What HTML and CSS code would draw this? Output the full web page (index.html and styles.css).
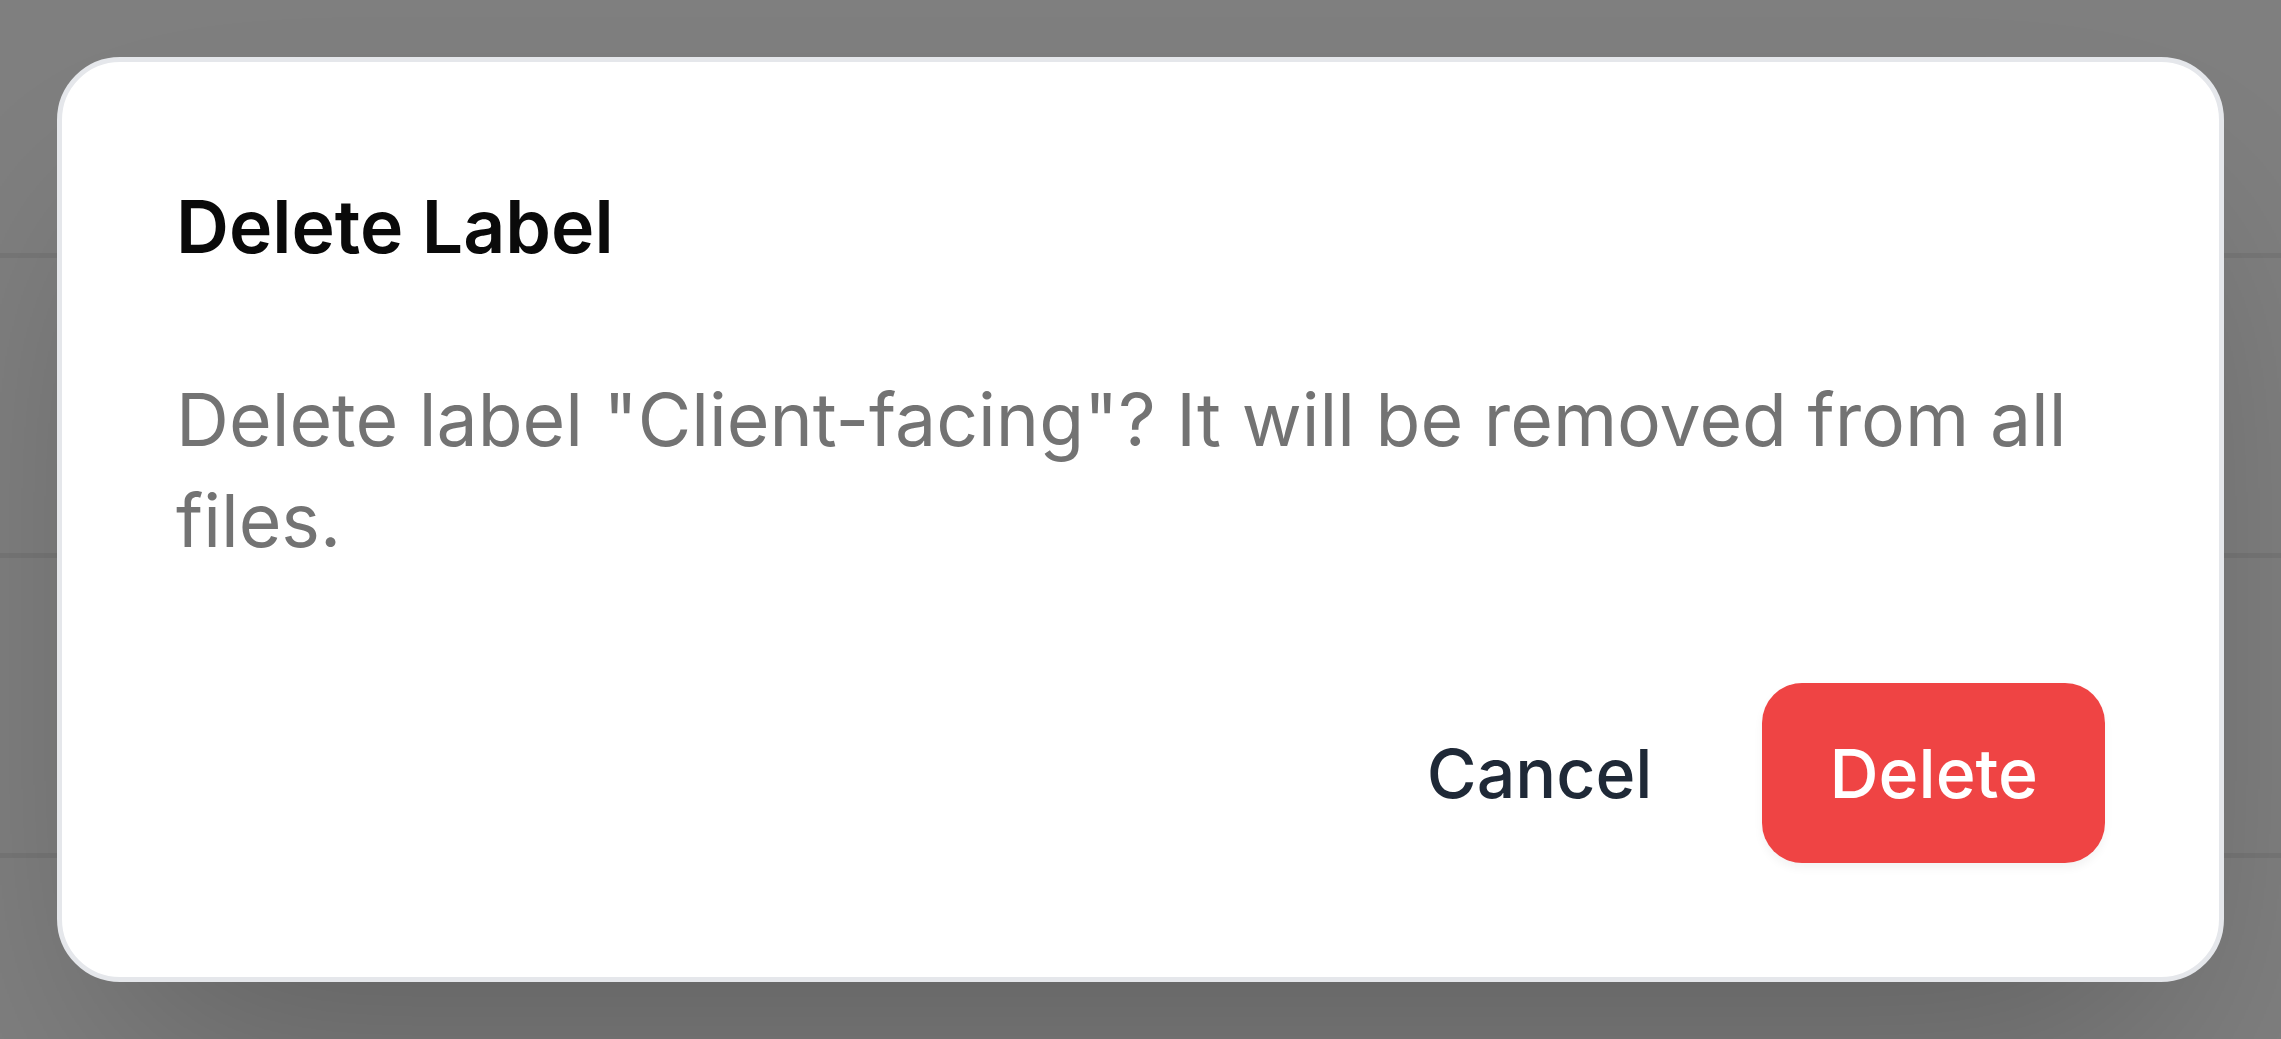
FILE: index.html
```html
<!DOCTYPE html>
<html lang="en">
<head>
<meta charset="utf-8">
<title>Delete Label</title>
<link rel="stylesheet" href="styles.css">
</head>
<body>
<div class="page">
  <div class="row row-first"></div>
  <div class="row"></div>
  <div class="row"></div>
  <div class="row-rest"></div>
</div>
<div class="overlay">
  <div class="modal" role="dialog" aria-labelledby="dlg-title">
    <h2 class="modal-title" id="dlg-title">Delete Label</h2>
    <p class="modal-text">Delete label "Client-facing"? It will be removed from all files.</p>
    <div class="modal-actions">
      <button class="btn btn-cancel" type="button">Cancel</button>
      <button class="btn btn-danger" type="button">Delete</button>
    </div>
  </div>
</div>
</body>
</html>
```
FILE: styles.css
```css
* { box-sizing: border-box; }
html, body { margin: 0; padding: 0; height: 100%; }
body {
  background: #ffffff;
  font-family: Inter, "Noto Sans", "Liberation Sans", sans-serif;
  overflow: hidden;
}
.page {
  display: flex;
  flex-direction: column;
  height: 100%;
  overflow: hidden;
}
.row {
  height: 300px;
  flex: none;
  border-bottom: 5px solid #eeeeee;
}
.row-first { height: 258px; }
.row-rest { flex: 1; }
.overlay {
  position: fixed;
  inset: 0;
  background: rgba(0, 0, 0, 0.5);
  display: flex;
  align-items: center;
  justify-content: center;
  padding: 57px;
}
.modal {
  width: 100%;
  background: #ffffff;
  border: 5px solid #e5e7eb;
  border-radius: 63px;
  padding: 114px;
  box-shadow: 0 119px 238px -57px rgba(0, 0, 0, 0.25);
}
.modal-title {
  margin: 0;
  font-size: 73.3px;
  line-height: 101px;
  font-weight: 600;
  color: #0a0a0a;
}
.modal-text {
  margin: 92px 0 0;
  font-size: 73.3px;
  line-height: 101px;
  font-weight: 400;
  color: #737373;
}
.modal-actions {
  margin-top: 112px;
  display: flex;
  justify-content: flex-end;
  gap: 43px;
}
.btn {
  height: 180px;
  padding: 0 67px;
  border: 0;
  border-radius: 40px;
  font-family: inherit;
  font-size: 68px;
  font-weight: 500;
  cursor: pointer;
}
.btn-cancel {
  background: transparent;
  color: #1f2937;
}
.btn-danger {
  background: #ef4444;
  color: #ffffff;
  box-shadow: 0 5px 10px rgba(0, 0, 0, 0.05);
}
```
